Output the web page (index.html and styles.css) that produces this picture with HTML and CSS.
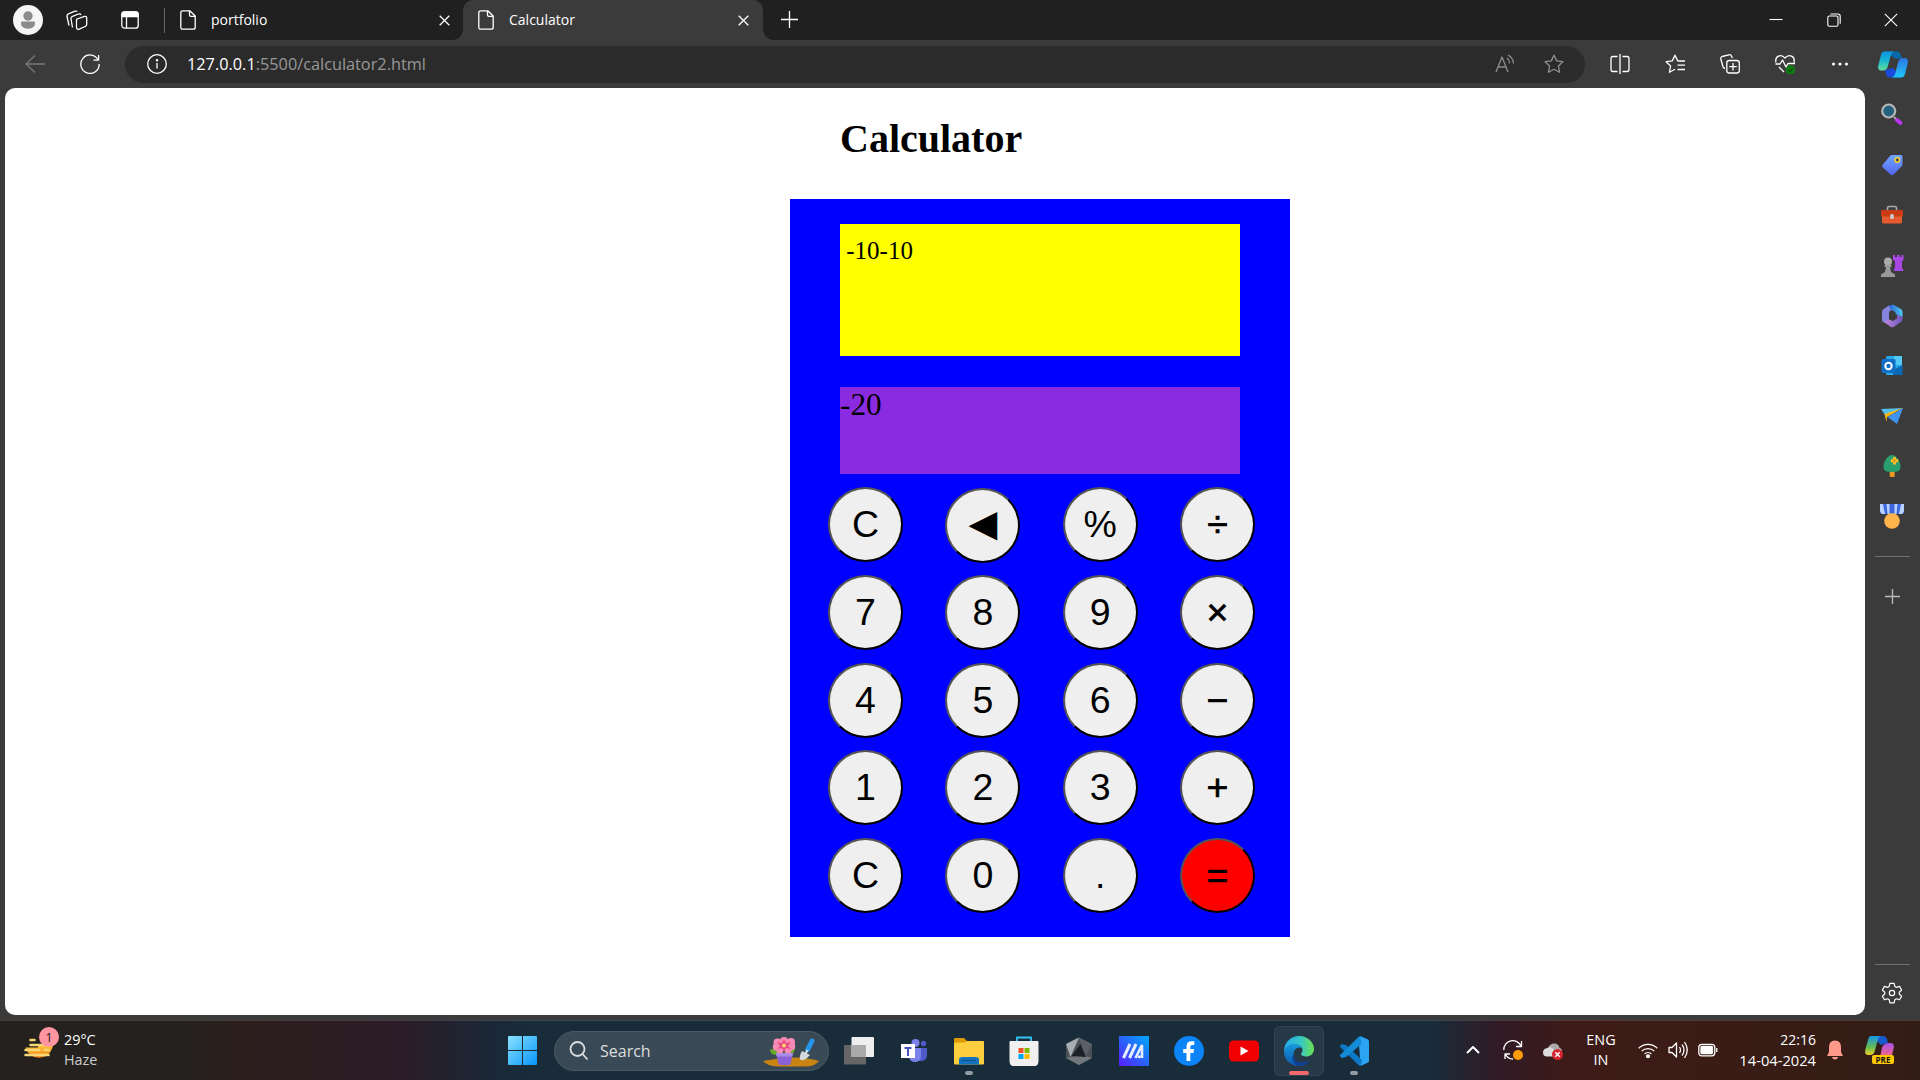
FILE: index.html
```html
<!DOCTYPE html>
<html lang="en">
<head>
<meta charset="utf-8">
<title>Calculator</title>
<link rel="stylesheet" href="styles.css">
</head>
<body>
<div class="desktop">
  <header class="tabstrip">
    <div class="strip-left">
      <svg class="avatar" viewBox="0 0 30 30"><circle cx="15" cy="15" r="15" fill="#f5f5f5"/><circle cx="15" cy="11" r="4.7" fill="#8b8b8b"/><path d="M8 17.500q0-1 1-1h12q1 0 1 1v1.500c0 3-4 4.700-7 4.700s-7-1.700-7-4.700z" fill="#8b8b8b"/></svg>
      <svg class="line workspaces" viewBox="0 0 22 22"><path d="M3 16.500 1 7.500q-.3-2 1.500-2.700L9 2.200q1.500-.5 2.200.5M6.500 18.500 5 10q-.2-2 1.500-2.600l6-2.400q1.700-.5 2.500.8"/><path d="m11 10 7.500-2.600q2-.4 2.200 1.300v6.800q0 1.400-1.500 2l-6 2.600q-2.300.8-2.700-1.500v-7q0-1 .5-1.600z"/></svg>
      <svg class="line tabmenu" viewBox="0 0 18 18"><rect x=".8" y=".8" width="16.400" height="16.400" rx="2.800"/><path d="M5.500 5v12"/><path d="M1 5.500V3q0-2 2-2h12q2 0 2 2v2.500z" fill="#fff"/></svg>
    </div>
    <div class="tab">
      <svg class="line doc" viewBox="0 0 16 20"><path d="M2.800.8h7L15.200 6v11.200q0 2-2 2H2.800q-2 0-2-2V2.800q0-2 2-2zM9.500 1v4q0 1.300 1.300 1.300H15"/></svg>
      <span class="tab-title">portfolio</span>
      <svg class="line close" viewBox="0 0 11 11"><path d="m.7.7 9.600 9.600m0-9.600L.7 10.300"/></svg>
    </div>
    <div class="tab active">
      <svg class="line doc" viewBox="0 0 16 20"><path d="M2.800.8h7L15.200 6v11.200q0 2-2 2H2.800q-2 0-2-2V2.800q0-2 2-2zM9.500 1v4q0 1.300 1.300 1.300H15"/></svg>
      <span class="tab-title">Calculator</span>
      <svg class="line close" viewBox="0 0 11 11"><path d="m.7.7 9.600 9.600m0-9.600L.7 10.300"/></svg>
    </div>
    <svg class="line newtab" viewBox="0 0 17 17"><path d="M8.500 0v17M0 8.500h17"/></svg>
    <div class="winbtns">
      <svg class="line thin" viewBox="0 0 14 14"><path d="M.5 6.500h13"/></svg>
      <svg class="line thin" viewBox="0 0 14 14"><rect x=".8" y="3" width="10.200" height="10.200" rx="1.500"/><path d="M3.500 1h7.500q2.200 0 2.200 2.200v7.500"/></svg>
      <svg class="line thin" viewBox="0 0 14 14"><path d="m.8.8 12.400 12.400m0-12.400L.8 13.200"/></svg>
    </div>
  </header>

  <div class="toolbar">
    <svg class="line back" viewBox="0 0 20 18"><path d="M20 9H1m9-8.500L1 9l9 8.500"/></svg>
    <svg class="line reload" viewBox="0 0 20 20"><path d="M18.200 6A9.200 9.200 0 1 0 19.200 10M18.600 1v5.200h-5.200"/></svg>
    <div class="address">
      <svg class="line info" viewBox="0 0 20 20"><circle cx="10" cy="10" r="9.300"/><path d="M10 9v5.500"/><circle cx="10" cy="6.200" r=".6" fill="#fff"/></svg>
      <span class="url"><b>127.0.0.1</b>:5500/calculator2.html</span>
      <svg class="line dim read" viewBox="0 0 20 20"><path d="m1 18 6-15 6 15M3 13h8M12 4q2.500 2 2.500 5.500M13 1q5 2.500 5.500 8.500"/></svg>
      <svg class="line dim star" viewBox="0 0 20 20"><path d="m10 1.200 2.700 5.700 6.200.8-4.500 4.300 1.200 6.300L10 15.300l-5.600 3 1.200-6.300L1.100 7.700l6.200-.8z"/></svg>
    </div>
    <div class="tools">
      <svg class="line" viewBox="0 0 20 20"><path d="M7.500 2.500H3Q1 2.500 1 4.500v11q0 2 2 2h4.500M12.500 2.500H17q2 0 2 2v11q0 2-2 2h-4.500M10 0v20"/></svg>
      <svg class="line" viewBox="0 0 20 20"><path d="M14 7.200 12.700 6.900 10 1.200 7.300 6.900l-6.200.8L5.600 12 4.400 18.300 10 15.300M13 7h7M12.500 11.200H20M12.500 15.500H20"/></svg>
      <svg class="line" viewBox="0 0 20 20"><rect x="6.800" y="6.500" width="12.500" height="12.500" rx="2.500"/><path d="M13 9v7.500M9.300 12.700h7.500M5 14.500q-1.500-.2-2-1.700L.8 5q-.4-1.800 1.200-2.500L9 .8q1.800-.4 2.500 1.200l.8 2"/></svg>
      <svg class="line" viewBox="0 0 20 20"><path d="M1 8.500C-.5 2 6-.5 10 4c4-4.500 10.500-2 9 4.500M.5 10H5l2.500-4L11 13l2-3.500h7M4 13l5 5"/><circle cx="15.500" cy="16" r="4.700" fill="#107c10" stroke="none"/><path d="m13.500 16 1.500 1.500 2.500-3" stroke="#0a4d0a"/></svg>
      <svg class="line" viewBox="0 0 20 20"><g fill="#fff" stroke="none"><circle cx="3.500" cy="10" r="1.600"/><circle cx="10" cy="10" r="1.600"/><circle cx="16.500" cy="10" r="1.600"/></g></svg>
    </div>
    <svg class="copilot" viewBox="0 0 30 27">
      <defs><linearGradient id="ca" x1="0" y1="0" x2="0" y2="1"><stop stop-color="#0b92df"/><stop offset=".45" stop-color="#15b5d2"/><stop offset="1" stop-color="#63dd9b"/></linearGradient><linearGradient id="cb" x1="0" y1="0" x2="0" y2="1"><stop stop-color="#2d73e4"/><stop offset="1" stop-color="#20c8f8"/></linearGradient></defs>
      <path d="M6 .5h13q2.500 0 3 2L24 7l-6 1z" fill="#0869a8"/><path d="M24 26.500H12q-3 0-4-3L7 19l8-2z" fill="#194bdc"/>
      <path d="M6 .5h10q-2.500 1-3.500 5l-2.700 10q-1 4-4.800 4H3q-4-.5-2.500-6L3 4Q4 .5 6 .5z" fill="url(#ca)"/><path d="M25 7h2q4 .5 2.500 6L27 23q-1 3.500-4 3.500h-9q2.500-1 3.500-5l2.500-10Q21 7 25 7z" fill="url(#cb)"/>
    </svg>
  </div>

  <div class="content">
    <main class="page">
      <h1 class="heading">Calculator</h1>
      <section class="calculator">
        <div class="expression">-10-10</div>
        <div class="result">-20</div>
        <div class="keys">
          <button class="key">C</button><button class="key erase">◀</button><button class="key">%</button><button class="key sign">÷</button>
          <button class="key">7</button><button class="key">8</button><button class="key">9</button><button class="key sign">×</button>
          <button class="key">4</button><button class="key">5</button><button class="key">6</button><button class="key sign">−</button>
          <button class="key">1</button><button class="key">2</button><button class="key">3</button><button class="key sign">+</button>
          <button class="key">C</button><button class="key">0</button><button class="key">.</button><button class="key sign equals">=</button>
        </div>
      </section>
    </main>
    <aside class="sidebar">
      <div class="apps">
        <svg class="find" viewBox="0 0 24 24"><path d="m14 15 2.500 2.500" stroke="#aaa" stroke-width="2"/><path d="m17 18 3.500 3" stroke="#b936f0" stroke-width="4" stroke-linecap="round"/><circle cx="8.700" cy="9" r="6.500" fill="#24617f" stroke="#b5b5b5" stroke-width="2.200"/></svg>
        <svg viewBox="0 0 24 24"><defs><linearGradient id="tg" x1="0" y1="0" x2="0" y2="1"><stop stop-color="#70a7ff"/><stop offset="1" stop-color="#5264ee"/></linearGradient></defs><path d="M12 2h9q1.500 0 1.500 1.500V11q0 1.500-1 2.500l-8 8q-1.500 1.500-3 0L2.800 14.500q-1.500-1.500 0-3L10 3q.8-1 2-1z" fill="url(#tg)"/><circle cx="17.300" cy="7" r="2.200" fill="#343d79" stroke="#ffd31c" stroke-width="1.500"/></svg>
        <svg viewBox="0 0 24 24"><path d="M7.500 7V5q0-1.500 1.500-1.500h6q1.500 0 1.500 1.500v2" fill="none" stroke="#aaa" stroke-width="1.600"/><rect x="2" y="12" width="20" height="8.500" rx="1.500" fill="#e55a31"/><rect x="1" y="7" width="22" height="6.500" rx="1.200" fill="#cb3b16"/><rect x="10.200" y="11" width="3.600" height="5" rx="1.500" fill="#ccc"/></svg>
        <svg viewBox="0 0 24 24"><path d="M13 1h2v2h2V1h2.500v2h2V1h2v5l-1.500 1v6l1.500 4H13.500L15 13V7l-2-1z" fill="#a846e6"/><circle cx="8" cy="7.500" r="4" fill="#aaa"/><path d="M4.500 11h7v2H10l1 5 4 2.500V23H1v-2.500L5 18l1-5H4.500z" fill="#999"/></svg>
        <svg viewBox="0 0 24 24"><defs><linearGradient id="ma"><stop stop-color="#2b5bd0"/><stop offset="1" stop-color="#4cc9f0"/></linearGradient><linearGradient id="mb"><stop stop-color="#c088dc"/><stop offset="1" stop-color="#6d55bf"/></linearGradient></defs><path d="m8 2 5-1.500 8 4.500q1.500 1 1.500 3v5l-7-3V8L11 6 8 8z" fill="url(#ma)"/><path d="M9 1.500 3.500 5Q2 6 2 8v8q0 2 2 2.500l5-2V8l2-2z" fill="#8583db"/><path d="m4 18 5-2.500 4 1.500 4-2.500v-4l5.500 2.500v2.500q0 1.500-1.500 2.500l-7.500 5q-1.500.7-3-.3z" fill="url(#mb)"/></svg>
        <svg viewBox="0 0 24 24"><rect x="6" y="2" width="16" height="19" rx="1.500" fill="#28a8e8"/><path d="M14 2h8v9h-8z" fill="#51c8f5"/><path d="m13 16 9.500-5v10h-9.500z" fill="#0a68b5"/><rect x="1.500" y="5" width="14" height="14" rx="1.500" fill="#0f6fc6"/><circle cx="8.500" cy="12" r="3.200" fill="none" stroke="#fff" stroke-width="2"/></svg>
        <svg viewBox="0 0 24 24"><path d="M1 5 23 4 5 11z" fill="#55c1ef"/><path d="M4.500 10 23 4 7 13l-.5 5z" fill="#fbb513"/><path d="M7.500 13 23 4l-6 16z" fill="#3f94ef"/></svg>
        <svg viewBox="0 0 24 24"><rect x="9.700" y="16" width="5" height="7" rx="1" fill="#e99b23"/><path d="M12 1C8 1 3.500 7 3.500 13c0 4 3 5 8.500 5s8.500-1 8.500-5C20.500 7 16 1 12 1z" fill="#279e6c"/><path d="M13 3h3v2.200h2.200v3H16v2.200h-3V8.200h-2.200v-3H13z" fill="#ffbd26"/><circle cx="14.500" cy="6.700" r="1.100" fill="#d37716"/></svg>
        <svg viewBox="0 0 26 26" class="medal"><path d="M1 1h24v8q0 2-2 2H3q-2 0-2-2z" fill="#3f66e1"/><path d="M1 1h3l2 10H3L1 8.500zM7.500 1h3v10h-2zM15.500 1h3l-1 10h-2zM22 1h3v7.500L23 11h-3z" fill="#b8d3ff"/><circle cx="13" cy="18" r="7.800" fill="#ffb44c"/></svg>
      </div>
      <div class="divider"></div>
      <svg class="line add" viewBox="0 0 15 15"><path d="M7.500 0v15M0 7.500h15"/></svg>
      <div class="spacer"></div>
      <div class="divider"></div>
      <svg class="line gear" viewBox="0 0 24 24"><circle cx="12" cy="12" r="2.900"/><path d="m9.700 1.400h4.600l.8 3.500 1.700 1 3.400-1.100 2.300 4-2.600 2.400v1.900l2.600 2.300-2.300 4-3.400-1.100-1.700 1-.8 3.400H9.700l-.8-3.400-1.700-1-3.400 1.100-2.300-4 2.600-2.300v-1.900L1.500 8.800l2.300-4 3.400 1.100 1.700-1z"/></svg>
    </aside>
  </div>

  <footer class="taskbar">
    <div class="weather">
      <div class="weather-icon">
        <svg viewBox="0 0 30 30"><defs><linearGradient id="su" x1="0" y1="0" x2="0" y2="1"><stop stop-color="#ffcf38"/><stop offset="1" stop-color="#f57c12"/></linearGradient></defs><path d="M1.500 13.500a14 14 0 0 0 27 0V10H14v3.500z" fill="url(#su)"/><path d="M6.500 6h4M6.500 11h20M1.500 16h14M20.500 16h4M1.500 21h23" stroke="#f7d877" stroke-width="2.500" stroke-linecap="round"/></svg>
        <span class="count">1</span>
      </div>
      <div class="weather-text"><span>29°C</span><span class="haze">Haze</span></div>
    </div>
    <div class="center">
      <svg class="start" viewBox="0 0 29 29"><defs><linearGradient id="wi" gradientUnits="userSpaceOnUse" x1="0" y1="0" x2="29" y2="29"><stop stop-color="#8be2ff"/><stop offset="1" stop-color="#0695f7"/></linearGradient></defs><path d="M0 1q0-1 1-1h13v14H0zM15 0h13q1 0 1 1v13H15zM0 15h14v14H1q-1 0-1-1zM15 15h14v13q0 1-1 1H15z" fill="url(#wi)"/></svg>
      <div class="search">
        <svg class="line lens" viewBox="0 0 20 20"><circle cx="8.500" cy="8" r="7"/><path d="m13.500 13 5 5.500"/></svg>
        <span>Search</span>
        <svg class="flower" viewBox="0 0 58 30"><path d="M1 24q14-3 27-3.500Q44 20 57 24q-4 5-12 5.500H16Q5 29 1 24z" fill="#c88310"/><path d="M18 17Q9 20 8 12.500q5-1 10 3zM22 17q2-6 11-5.500-1 8-9 7z" fill="#6bac27"/><path d="M14 16h17l-2.500 11q-.5 1-2 1h-8q-1.500 0-2-1z" fill="#8b62d6"/><path d="M14 16h17l-.7 3.500H14.700z" fill="#a98ae8"/><g fill="#f98ab5"><circle cx="22" cy="4" r="4"/><circle cx="15.500" cy="5.500" r="4"/><circle cx="29" cy="5" r="4"/><circle cx="14.500" cy="10" r="3.700"/><circle cx="29.500" cy="9.500" r="3.700"/><circle cx="18" cy="13" r="3.500"/><circle cx="26" cy="13" r="3.500"/></g><path d="m22 2 2 4 5-1-3 4 3 3-5-1-2 4-2-4-5 1 3-3-3-4 5 1z" fill="#e94d87"/><circle cx="22" cy="8.500" r="2" fill="#ffd36a"/><path d="m50 4-4.500 9" stroke="#2694e7" stroke-width="5" stroke-linecap="round"/><path d="m45.500 13-2 4" stroke="#ddd" stroke-width="2"/><path d="m40 14 8 4-4 4q-3 2-6 .5Q37 19 40 14z" fill="#d3d9dc"/></svg>
      </div>
      <div class="pins">
        <div class="pin"><svg viewBox="0 0 30 30"><rect x="0" y="9" width="22" height="19.500" rx="1" fill="#666"/><rect x="7.500" y="1" width="22.500" height="20" rx="1" fill="#eee"/><path d="M7.500 9H22v12H7.500z" fill="#aaa"/></svg></div>
        <div class="pin"><svg viewBox="0 0 30 30"><circle cx="16.500" cy="7" r="4" fill="#7b83eb"/><circle cx="24.500" cy="7.500" r="2.700" fill="#5059c9"/><path d="M18 12h10v8q-1 5-6 5h-4z" fill="#5059c9"/><path d="M10 12h12v9q-1 5-6 5t-6-5z" fill="#7b83eb"/><rect x="2" y="8" width="14" height="14" fill="#fff"/><path d="M5.500 12h7M9 12v8" stroke="#4b53bc" stroke-width="2"/></svg></div>
        <div class="pin open"><svg viewBox="0 0 30 30"><path d="M0 3q0-1 1-1h9l3 3h4v6H0z" fill="#dc9900"/><path d="M0 8q0-1.500 1.500-1.500h9L13 5h16q1 0 1 1v21.500q0 1-1 1H1q-1 0-1-1z" fill="#ffce3e"/><path d="M5 28.500V24q0-3 3-3h14q3 0 3 3v4.500z" fill="#1473be"/><path d="M8 24.500h14" stroke="#07518e" stroke-width="1.200"/></svg></div>
        <div class="pin"><svg viewBox="0 0 30 30"><path d="M8 6V1.500h14V6" fill="none" stroke="#36c2f0" stroke-width="1.800"/><path d="M.5 6q0-1 1-1h27q1 0 1 1v19q0 5-4 5h-21q-4 0-4-5z" fill="#f0f0f0"/><path d="M9.500 12H14.500v5H9.500z" fill="#f25022"/><path d="M15.500 12h5v5h-5z" fill="#7fba00"/><path d="M9.500 18h5v5h-5z" fill="#00a4ef"/><path d="M15.500 18h5v5h-5z" fill="#ffb900"/></svg></div>
        <div class="pin"><svg viewBox="0 0 30 30"><path d="M15 1.500 28 8v14l-13 7L2 22V8z" fill="#4b5056"/><path d="M15 1.500 2 8l4.500 13z" fill="#a6adb3"/><path d="m15 1.500 13 6.500-7 13z" fill="#5a6067"/><path d="m2 22 13 7 13-7-10-3z" fill="#73787d"/><path d="M16.500 8 22 21 7.500 20z" fill="#192127"/></svg></div>
        <div class="pin"><svg viewBox="0 0 30 30"><defs><linearGradient id="mm" x1="0" y1="1" x2="1" y2="0"><stop stop-color="#591cfb"/><stop offset=".5" stop-color="#2964fb"/><stop offset="1" stop-color="#00a9ff"/></linearGradient></defs><path d="M0 0h30v30H0z" fill="url(#mm)"/><path d="M4.500 22 11 8M10.500 22 17 8" stroke="#e6edff" stroke-width="3"/><path d="M16.500 22 23 9v13" fill="none" stroke="#e6edff" stroke-width="2.600"/><circle cx="20.300" cy="20.700" r="1.500" fill="#fff"/></svg></div>
        <div class="pin"><svg viewBox="0 0 30 30"><circle cx="15" cy="15" r="15" fill="#0c83f7"/><path d="M12.500 25v-8H9.200v-4h3.300v-2.500q0-5.300 5-5.300h2.800v3.700h-2q-2 0-2 2V13h3.800l-.7 4h-3.100v8z" fill="#fff"/></svg></div>
        <div class="pin"><svg viewBox="0 0 30 30"><rect y="4.500" width="30" height="21" rx="4.500" fill="#f00000"/><path d="m11.500 10.500 8 4.500-8 4.500z" fill="#fff"/></svg></div>
        <div class="pin current"><svg viewBox="0 0 30 30"><defs><linearGradient id="ea"><stop stop-color="#29a9e8"/><stop offset=".55" stop-color="#35c7c7"/><stop offset="1" stop-color="#6de250"/></linearGradient><linearGradient id="eb" x1="0" y1="0" x2="0" y2="1"><stop stop-color="#1799dc"/><stop offset="1" stop-color="#0b59b2"/></linearGradient></defs><path d="M0 16C0 5 8 0 15 0c9 0 15 6.500 15 13 0 5-4 7.500-8 7.500-3 0-5-1-5-2.500 0-1 1.500-2 1.500-4 0-3-3-5.500-7-5.500C5 8.500 1 12 0 16z" fill="url(#ea)"/><path d="M0 16c.5-4.500 5-8 10-8 4 0 7 2 8 4-4-2-9 1.500-8.500 7 .5 7 8 10 15.500 6-2.500 3-6 5-10 5C6.500 30 0 23.500 0 16z" fill="url(#eb)"/><path d="M9.500 19c.5 7 8 10 16 5-3 5.500-8 6.500-12 5.500C8 27.500 7.500 20 9.500 19z" fill="#103f8f"/></svg></div>
        <div class="pin open"><svg viewBox="0 0 30 30"><path d="m21 0 8 3.500q1 .5 1 2v19q0 1.500-1 2L21.500 30 20 8z" fill="#2aa4f3"/><path d="M.5 10.500 3 8l4 1 16 15-1.500 6q-1 0-2-1z" fill="#0c78c7"/><path d="M.5 19.500 3 22l4-1L22.500 8l-1-8q-1 0-2 1z" fill="#138bd8"/></svg></div>
      </div>
    </div>
    <div class="tray">
      <svg class="line chev" viewBox="0 0 14 8"><path d="m1 7 6-6 6 6"/></svg>
      <svg class="line t20" viewBox="0 0 20 20"><path d="M.8 10A9 9 0 0 1 18 6M18.500 1v5.500H13M2 19v-5h5M2.500 14.500Q5 19 10 19"/><circle cx="15" cy="15" r="5" fill="#ff9c0a" stroke="none"/></svg>
      <svg class="t20" viewBox="0 0 20 20"><path d="M5 8q2-5 7-4.500Q16 4 16.500 8q1.500 0 2.500 2v5H6z" fill="#aaa"/><path d="M0 12.500Q0 8.500 4.500 8q4-2 6.500 2v6.500H4Q0 16.500 0 12.500z" fill="#ddd"/><circle cx="14.500" cy="14.500" r="5.500" fill="#d7262e"/><path d="m12.300 12.300 4.400 4.400m0-4.400-4.400 4.400" stroke="#fff" stroke-width="1.400"/></svg>
      <div class="lang"><span>ENG</span><span>IN</span></div>
      <svg class="line t20" viewBox="0 0 20 20"><path d="M.8 8.200a13 13 0 0 1 18.400 0M3.700 11.100a9 9 0 0 1 12.600 0M6.600 14a5 5 0 0 1 6.800 0"/><circle cx="10" cy="16.300" r="1.400" fill="#fff"/></svg>
      <svg class="line t20" viewBox="0 0 20 20"><path d="M1 7.500h3L8.500 3v14L4 12.500H1zM11.500 7q2 3 0 6M14 4.500q4 5.500 0 11M16.500 2q5.500 8 0 16"/></svg>
      <svg class="line t20" viewBox="0 0 20 20"><rect x=".8" y="4.300" width="16" height="11.500" rx="3"/><rect x="3" y="6.500" width="11.500" height="7" rx="1" fill="#fff"/><path d="M18.800 8v4"/></svg>
      <div class="clock"><span>22:16</span><span class="date">14-04-2024</span></div>
      <svg class="bell" viewBox="0 0 16 20"><path d="M8 .5q6 0 6 6.500v5l2 4H0l2-4V7q0-6.500 6-6.500zM5 17h6q-.5 2.500-3 2.500T5 17z" fill="#ff998a"/></svg>
      <div class="pre-icon">
        <svg viewBox="0 0 30 28"><defs><linearGradient id="pa" x1="0" y1="0" x2="0" y2="1"><stop stop-color="#1497e8"/><stop offset=".6" stop-color="#67bc52"/><stop offset="1" stop-color="#f1cf27"/></linearGradient><linearGradient id="pb" x1="0" y1="0" x2="0" y2="1"><stop stop-color="#a450e8"/><stop offset=".6" stop-color="#ef6591"/><stop offset="1" stop-color="#f99c52"/></linearGradient></defs><path d="M6 0h12q3 0 4 3l1 4-7 2z" fill="#1759ce"/><path d="M6 0h10q-2.500 1-3.500 5l-2.700 10q-1 4-4.800 4H3q-4-.5-2.500-6L3 4Q4 0 6 0z" fill="url(#pa)"/><path d="M24 7h2q4 .5 2.500 6L26 23q-1 3.500-4 3.500H9q5-1 6-5l2-10Q19 7 24 7z" fill="url(#pb)"/></svg>
        <span class="pre">PRE</span>
      </div>
    </div>
  </footer>
</div>
</body>
</html>
```

FILE: styles.css
```css
* { box-sizing: border-box; }

body {
  margin: 0;
  background: #3b3b3b;
  font-family: "Open Sans", "Noto Sans", sans-serif;
  font-size: 14px;
  color: #fff;
}

svg { display: block; flex: none; }

.line {
  fill: none;
  stroke: #fff;
  stroke-width: 1.3;
  stroke-linejoin: round;
}
.thin { stroke-width: 1.1; }
.dim { stroke: #8f8f8f; }

.desktop {
  width: 1920px;
  height: 1080px;
  display: flex;
  flex-direction: column;
  overflow: hidden;
}

/* Tab strip */
.tabstrip {
  height: 40px;
  display: flex;
  align-items: center;
  background: #202020;
}
.strip-left {
  width: 165px;
  height: 25px;
  display: flex;
  align-items: center;
  padding-left: 13px;
  border-right: 1px solid #686868;
}
.avatar { width: 30px; height: 30px; }
.workspaces { width: 22px; height: 22px; margin-left: 23px; }
.tabmenu { width: 18px; height: 18px; margin-left: 33px; }
.tab {
  width: 298px;
  height: 40px;
  display: flex;
  align-items: center;
  padding: 0 13px 0 15px;
}
.tab.active {
  position: relative;
  width: 300px;
  padding: 0 14px 0 15px;
  background: #3b3b3b;
  border-radius: 10px 10px 0 0;
}
.tab.active::before,
.tab.active::after {
  content: "";
  position: absolute;
  bottom: 0;
  width: 10px;
  height: 10px;
}
.tab.active::before {
  left: -10px;
  background: radial-gradient(circle at 0 0, #202020 9.500px, #3b3b3b 10px);
}
.tab.active::after {
  right: -10px;
  background: radial-gradient(circle at 100% 0, #202020 9.500px, #3b3b3b 10px);
}
.doc { width: 16px; height: 20px; }
.tab-title { flex: 1; margin-left: 15px; line-height: 20px; }
.close { width: 11px; height: 11px; }
.newtab { width: 17px; height: 17px; margin: 0 0 1px 18px; }
.winbtns { display: flex; gap: 43.500px; margin-left: auto; padding-right: 22px; }
.winbtns svg { width: 14px; height: 14px; }

/* Navigation bar */
.toolbar { height: 48px; display: flex; align-items: center; }
.back { width: 20px; height: 18px; margin-left: 25px; stroke: #777; }
.reload { width: 20px; height: 20px; margin-left: 35px; }
.address {
  width: 1460px;
  height: 37px;
  display: flex;
  align-items: center;
  margin-left: 25px;
  padding: 0 21px 0 22px;
  background: #2b2b2b;
  border-radius: 19px;
}
.info { width: 20px; height: 20px; }
.url { flex: 1; margin-left: 20px; font-size: 16.300px; color: #989898; }
.url b { font-weight: 400; color: #fff; }
.read { width: 20px; height: 20px; margin-right: 29px; }
.star { width: 20px; height: 20px; }
.tools { display: flex; gap: 35px; margin-left: 25px; }
.tools svg { width: 20px; height: 20px; }
.copilot { width: 30px; height: 27px; margin-left: 28px; }

/* Page area with the app sidebar */
.content { flex: 1; display: flex; padding-bottom: 5px; }
.page {
  width: 1860px;
  margin-left: 5px;
  padding-left: 785px;
  background: #fff;
  border-radius: 10px;
  color: #000;
  font-family: "Liberation Serif", "Times New Roman", serif;
}
.heading {
  margin: 28px 0 37px 50px;
  font-size: 40px;
  line-height: 46px;
}
.calculator {
  width: 500px;
  height: 738px;
  padding-top: 25px;
  background: #00f;
}
.expression {
  height: 132px;
  margin: 0 50px;
  padding: 13px 6.250px;
  background: #ff0;
  font-size: 25px;
  line-height: 28px;
}
.result {
  height: 87px;
  margin: 31px 50px 13px;
  background: blueviolet;
  font-size: 31.250px;
  line-height: 36px;
}
.keys {
  display: grid;
  grid-template-columns: repeat(4, 75px);
  grid-auto-rows: 75px;
  gap: 12.750px 42.330px;
  padding-left: 38px;
}
.key {
  padding: 0;
  border: 2px outset #000;
  border-radius: 50%;
  background: #efefef;
  color: #000;
  font: 37.500px "Liberation Sans", Arial, sans-serif;
}
.sign { -webkit-text-stroke: .7px #000; }
.erase {
  margin: 1px 0 -1px;
  padding-bottom: 5px;
  font-family: "DejaVu Sans", sans-serif;
}
.equals { background: #f00; }

.sidebar {
  flex: 1;
  display: flex;
  flex-direction: column;
  align-items: center;
}
.apps {
  display: grid;
  grid-auto-rows: 50.200px;
  place-items: center;
  margin: 2px 1px 0 0;
}
.apps svg { width: 24px; height: 24px; }
.apps .find { margin-bottom: 2px; }
.apps .medal { width: 26px; height: 26px; margin-bottom: 2px; }
.divider { width: 35px; height: 1px; background: #707070; }
.apps + .divider { margin-top: 14px; }
.add { width: 15px; height: 15px; margin: 32px 1px 0 0; stroke: #bbb; }
.spacer { flex: 1; }
.gear { width: 22px; height: 22px; margin: 17px 1px 11px 0; }

/* Taskbar */
.taskbar {
  height: 60px;
  display: flex;
  align-items: center;
  border-top: 1px solid rgba(255, 255, 255, .13);
  background: linear-gradient(90deg, #24211f 0, #24211f 180px, #2c1e1c 240px, #2b1c27 400px, #1c2736 485px, #182c3a 530px, #182c3a 1430px, #321b25 1500px, #3d1b18 1570px, #3a1c15 1700px, #321d16 1920px);
  line-height: 20px;
}
.weather { width: 508px; display: flex; padding-left: 24px; }
.weather-icon { position: relative; width: 30px; height: 40px; padding-top: 4px; }
.weather-icon svg { width: 30px; height: 30px; }
.count {
  position: absolute;
  left: 15px;
  top: -3px;
  width: 20px;
  height: 20px;
  border-radius: 50%;
  background: #ff95a0;
  color: #222;
  font-size: 13px;
  text-align: center;
}
.weather-text {
  display: flex;
  flex-direction: column;
  margin-left: 10px;
  padding-bottom: 2px;
  font-size: 14.400px;
}
.haze { color: #ccc; }
.center { display: flex; align-items: center; }
.start { width: 29px; height: 29px; }
.search {
  width: 275px;
  height: 40px;
  display: flex;
  align-items: center;
  margin-left: 17px;
  padding: 0 8px 0 14px;
  border: 1px solid #4b5b66;
  border-radius: 20px;
  background: #394955;
  color: #ddd;
  font-size: 16px;
}
.search span { flex: 1; margin-left: 11px; }
.lens { width: 20px; height: 20px; stroke: #ddd; stroke-width: 1.800; }
.flower { width: 58px; height: 30px; margin-top: 3px; }
.pins { display: flex; gap: 5px; margin-left: 5px; }
.pin {
  position: relative;
  width: 50px;
  height: 50px;
  display: grid;
  place-items: center;
  border-radius: 6px;
}
.pin svg { width: 30px; height: 30px; }
.pin.current { background: #263947; box-shadow: inset 0 0 0 1px #30434f; }
.pin.open::after,
.pin.current::after {
  content: "";
  position: absolute;
  bottom: 1px;
  left: 21px;
  width: 8px;
  height: 4px;
  border-radius: 2px;
  background: #949ca3;
}
.pin.current::after { left: 15px; width: 20px; background: #f4696a; }
.tray {
  display: grid;
  grid-template-columns: 40px 40px 40px 56px 38px 22px 38px 89px 38px 52px;
  align-items: center;
  justify-items: center;
  margin-left: auto;
  padding: 0 14px 2px 0;
}
.chev { width: 14px; height: 8px; stroke-width: 2; }
.t20 { width: 20px; height: 20px; }
.lang { display: flex; flex-direction: column; align-items: center; font-size: 14.400px; }
.clock { display: flex; flex-direction: column; align-items: flex-end; justify-self: end; }
.date { font-size: 14.700px; }
.bell { width: 16px; height: 20px; }
.pre-icon { position: relative; width: 30px; height: 28px; }
.pre-icon svg { width: 30px; height: 28px; }
.pre {
  position: absolute;
  left: 7px;
  bottom: 0;
  width: 22px;
  height: 9px;
  border-radius: 2px;
  background: #ffc800;
  color: #111;
  font-size: 8px;
  font-weight: 700;
  line-height: 9px;
  text-align: center;
}
```
